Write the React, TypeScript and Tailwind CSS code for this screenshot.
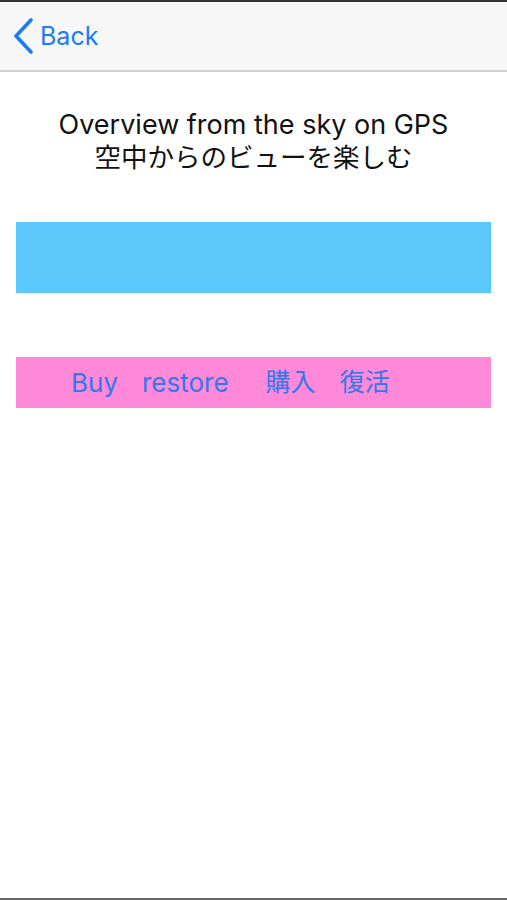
function BackChevron() {
    return (
        <svg width="22" height="36" viewBox="0 0 22 36" fill="none">
            <path d="M19 2 L4 18 L19 34" stroke="currentColor" strokeWidth="3.6" strokeLinecap="round" strokeLinejoin="round" />
        </svg>
    );
}

function NavBar() {
    return (
        <div className="h-[70px] bg-[#f7f7f7] border-b-2 border-[#d2d2d2] flex items-center">
            <button className="flex items-center gap-[6px] text-[#1a7cf4] ml-[12px]">
                <BackChevron />
                <span className="text-[25px] leading-none">Back</span>
            </button>
        </div>
    );
}

function App() {
    return (
        <div
            className="w-[507px] h-[900px] bg-white border-t-2 border-b-2 border-t-[#333] border-b-[#666] flex flex-col overflow-hidden"
            style={{ fontFamily: 'Inter, "Noto Sans CJK JP", sans-serif' }}
        >
            <NavBar />

            <div className="mt-[37px] text-center text-[#111]">
                <p className="text-[27px] leading-[32px]">Overview from the sky on GPS</p>
                <p className="text-[26.5px] leading-[32px]">空中からのビューを楽しむ</p>
            </div>

            <div className="mx-[16px] mt-[49px] h-[71px] bg-[#5ac8fa]" />

            <div className="mx-[16px] mt-[64px] h-[51px] bg-[#ff88d8] flex items-center pl-[55px] text-[26px] text-[#3277ec]">
                <span>Buy</span>
                <span className="ml-[24px]">restore</span>
                <span className="ml-[37px] text-[25px]">購入</span>
                <span className="ml-[24px] text-[25px]">復活</span>
            </div>
        </div>
    );
}

export default App;
